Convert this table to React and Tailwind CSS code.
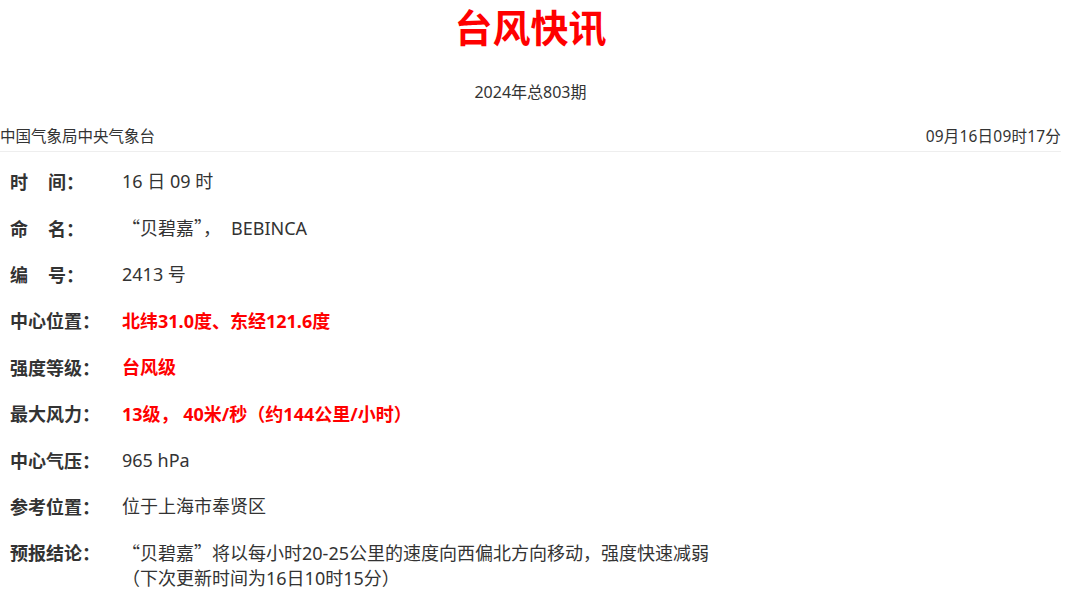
import React from "react";

const CJK = "font-['Noto_Sans_CJK_SC']";

function Row({ label, children, red, multi }) {
  return (
    <div
      className={
        "flex leading-[24px] " +
        (multi ? "items-start pt-[11.2px] pb-[11.2px]" : "h-[46.4px] items-center")
      }
    >
      <div className="w-[122px] shrink-0 pl-[10px] text-[18px] font-bold text-[#333] font-['Noto_Sans_CJK_SC',sans-serif]">
        {label}
      </div>
      <div
        className={
          (red ? "text-[#ff0000] font-bold " : "text-[#333] ") +
          "text-[18px] font-['Noto_Sans','Noto_Sans_CJK_SC',sans-serif]"
        }
      >
        {children}
      </div>
    </div>
  );
}

export default function App() {
  return (
    <div className="w-[1061px] bg-white font-['Noto_Sans','Noto_Sans_CJK_SC',sans-serif] text-[#333]">
      <h1 className="pt-[3px] text-center text-[38px] leading-[46px] font-bold text-[#ff0000] font-['Noto_Sans_CJK_SC',sans-serif]">
        台风快讯
      </h1>
      <div className="mt-[31px] text-center text-[16px] leading-[24px]">2024年总803期</div>
      <div className="mt-[20px] flex justify-between border-b border-[#eeeeee] pb-[3px] text-[15.5px] leading-[24px]">
        <span>中国气象局中央气象台</span>
        <span className="tracking-[0.2px]">09月16日09时17分</span>
      </div>
      <div className="pt-[6px]">
        <Row
          label={
            <span>
              时<span className="inline-block w-[20px]" />间：
            </span>
          }
        >
          16 日 09 时
        </Row>
        <Row
          label={
            <span>
              命<span className="inline-block w-[20px]" />名：
            </span>
          }
        >
          <span className={CJK}>“贝碧嘉”，</span>
          <span className="ml-[10px]">BEBINCA</span>
        </Row>
        <Row
          label={
            <span>
              编<span className="inline-block w-[20px]" />号：
            </span>
          }
        >
          2413 号
        </Row>
        <Row label="中心位置：" red>
          北纬31.0度<span className={CJK}>、</span>东经121.6度
        </Row>
        <Row label="强度等级：" red>
          台风级
        </Row>
        <Row label="最大风力：" red>
          13级<span className={CJK}>，</span> 40米/秒<span className={CJK}>（</span>约144公里/小时<span className={CJK}>）</span>
        </Row>
        <Row label="中心气压：">965 hPa</Row>
        <Row label="参考位置：">位于上海市奉贤区</Row>
        <Row label="预报结论：" multi>
          <span className={CJK}>“</span>贝碧嘉<span className={CJK}>”</span>将以每小时20-25公里的速度向西偏北方向移动<span className={CJK}>，</span>强度快速减弱
          <br />
          <span className={CJK}>（</span>下次更新时间为16日10时15分<span className={CJK}>）</span>
        </Row>
      </div>
    </div>
  );
}
